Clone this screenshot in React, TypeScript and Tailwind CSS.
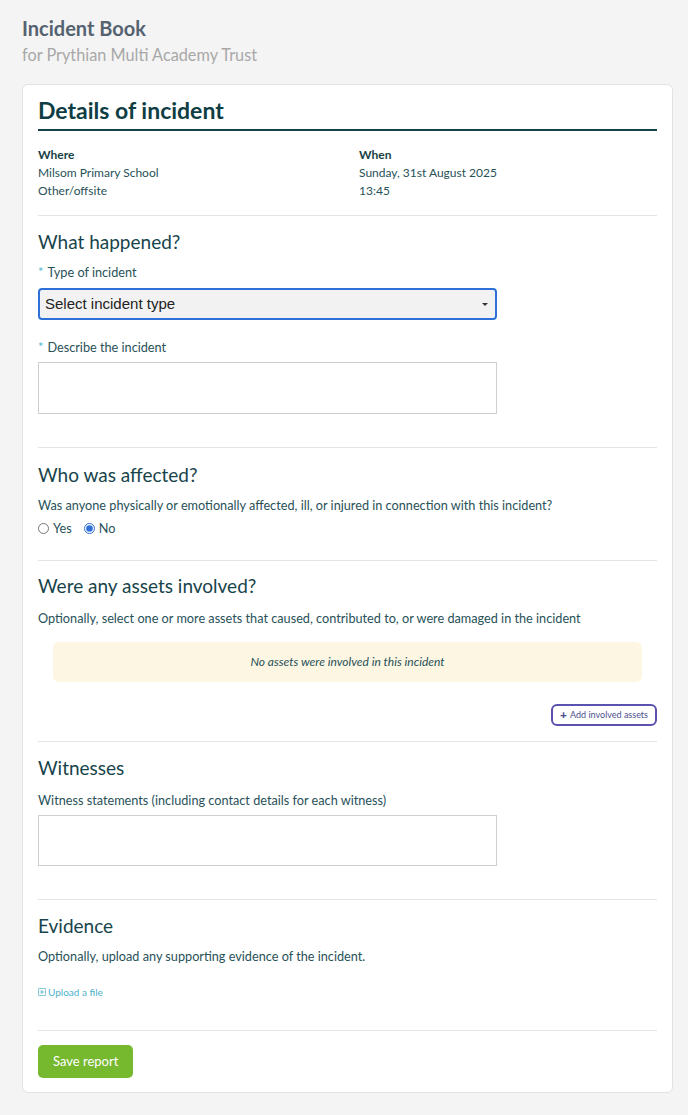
const font = { fontFamily: "Lato, 'Noto Sans', sans-serif" };

function Label({ children, required }: { children: React.ReactNode; required?: boolean }) {
  return (
    <p className="text-[12.7px] leading-[18px] text-[#285158]">
      {required && <span className="mr-1 text-[#4cb8d2]">*</span>}
      {children}
    </p>
  );
}

function Heading({ children }: { children: React.ReactNode }) {
  return <h3 className="text-[19px] leading-[26px] text-[#17444b]">{children}</h3>;
}

export default function App() {
  return (
    <div className="min-h-[1115px] bg-[#f4f4f4] pb-[23px] pl-[22px] pr-[15px] pt-[16px]" style={font}>
      <h1 className="text-[20px] font-bold leading-[24px] text-[#556270]">Incident Book</h1>
      <p className="mt-[3px] text-[16.3px] leading-[24px] text-[#a8a8a8]">for Prythian Multi Academy Trust</p>

      <div className="mt-[17px] rounded-md border border-[#e2e2e2] bg-white px-[15px] pb-[14px] pt-[11px]">
        <h2 className="border-b-2 border-[#16434b] pb-[5px] text-[23px] font-bold leading-[28px] text-[#0f3d44]">
          Details of incident
        </h2>

        <div className="grid grid-cols-[321px_1fr] border-b border-[#e4e4e4] pb-[15px] pt-[15px] text-[12px] leading-[18px] text-[#285158]">
          <div>
            <p className="font-bold text-[#163f46]">Where</p>
            <p>Milsom Primary School</p>
            <p>Other/offsite</p>
          </div>
          <div>
            <p className="font-bold text-[#163f46]">When</p>
            <p>Sunday, 31st August 2025</p>
            <p>13:45</p>
          </div>
        </div>

        <section className="border-b border-[#e4e4e4] pb-[33px] pt-[13px]">
          <Heading>What happened?</Heading>
          <div className="mt-[8px]">
            <Label required>Type of incident</Label>
          </div>
          <div
            className="mt-[7px] flex h-[32px] w-[459px] items-center justify-between rounded-[4px] border-2 border-[#2f6fd8] bg-[#f2f2f2] pl-[5px] pr-[7px] text-[15px] text-[#222]"
            style={{ fontFamily: "'Liberation Sans', Arial, sans-serif" }}
          >
            <span>Select incident type</span>
            <span className="h-0 w-0 border-x-[3px] border-t-[3px] border-x-transparent border-t-[#333]" />
          </div>
          <div className="mt-[18px]">
            <Label required>Describe the incident</Label>
          </div>
          <div className="mt-[6px] h-[52px] w-[459px] border border-[#cfcfcf] bg-white" />
        </section>

        <section className="border-b border-[#e4e4e4] pb-[23px] pt-[14px]">
          <Heading>Who was affected?</Heading>
          <div className="mt-[8px]">
            <Label>Was anyone physically or emotionally affected, ill, or injured in connection with this incident?</Label>
          </div>
          <div className="mt-[5px] flex items-center text-[12.7px] leading-[18px] text-[#285158]">
            <input type="radio" name="affected" className="m-0 h-[11px] w-[11px]" />
            <span className="ml-[4px]">Yes</span>
            <input type="radio" name="affected" defaultChecked className="m-0 ml-[12px] h-[11px] w-[11px] accent-[#2f6fd8]" />
            <span className="ml-[4px]">No</span>
          </div>
        </section>

        <section className="border-b border-[#e4e4e4] pb-[15px] pt-[12px]">
          <Heading>Were any assets involved?</Heading>
          <div className="mt-[10px]">
            <Label>Optionally, select one or more assets that caused, contributed to, or were damaged in the incident</Label>
          </div>
          <div className="mx-[15px] mt-[15px] flex h-[40px] items-center justify-center rounded-md bg-[#fcf6e3] text-[12px] italic text-[#285158]">
            No assets were involved in this incident
          </div>
          <div className="mt-[22px] flex justify-end">
            <button className="flex h-[22px] items-center gap-[3px] rounded-md border-2 border-[#5b52b0] px-[7px] text-[9px] text-[#4d4f8f]">
              <span className="text-[12px] font-black leading-none">+</span>
              Add involved assets
            </button>
          </div>
        </section>

        <section className="border-b border-[#e4e4e4] pb-[33px] pt-[13px]">
          <Heading>Witnesses</Heading>
          <div className="mt-[10px]">
            <Label>Witness statements (including contact details for each witness)</Label>
          </div>
          <div className="mt-[6px] h-[51px] w-[459px] border border-[#cfcfcf] bg-white" />
        </section>

        <section className="border-b border-[#e4e4e4] pb-[31px] pt-[13px]">
          <Heading>Evidence</Heading>
          <div className="mt-[8px]">
            <Label>Optionally, upload any supporting evidence of the incident.</Label>
          </div>
          <button className="mt-[20px] flex items-center gap-[2px] text-[10px] leading-[14px] text-[#4cb2cc]">
            <svg viewBox="0 0 10 10" className="h-[8px] w-[8px]" fill="none" stroke="currentColor" strokeWidth="1">
              <rect x="0.5" y="0.5" width="9" height="9" rx="1" />
              <path d="M5 2.5v5M2.5 5h5" />
            </svg>
            Upload a file
          </button>
        </section>

        <button className="mt-[14px] h-[33px] rounded-[5px] bg-[#76b82e] px-[15px] text-[13px] text-white">
          Save report
        </button>
      </div>
    </div>
  );
}
